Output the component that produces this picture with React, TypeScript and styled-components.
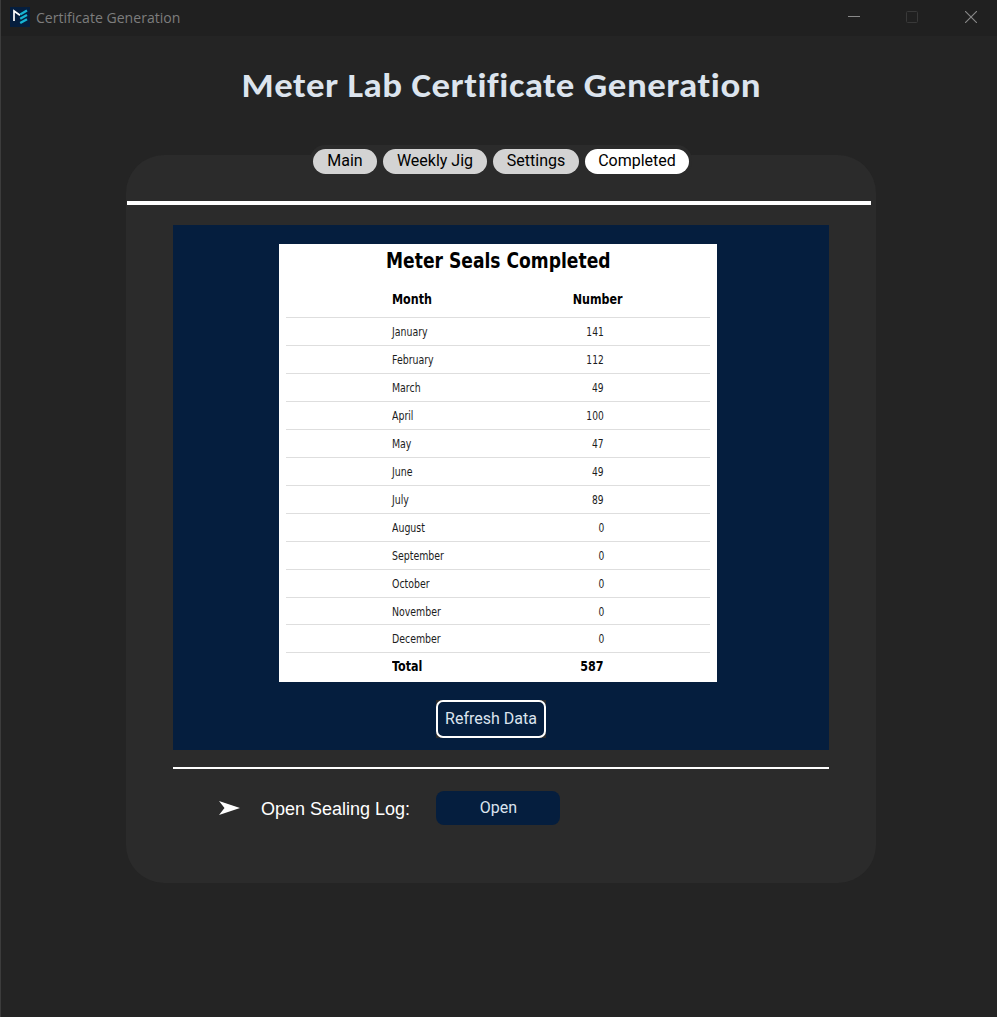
import React from 'react';
import styled, { createGlobalStyle } from 'styled-components';

const Global = createGlobalStyle`
  * { box-sizing: border-box; }
  body { margin: 0; background: #242424; }
`;

const Window = styled.div`
  width: 997px;
  height: 1017px;
  overflow: hidden;
  background: #242424;
  border-left: 1px solid #3c3c3c;
  display: flex;
  flex-direction: column;
  font-family: Roboto, sans-serif;
`;

const TitleBar = styled.header`
  height: 36px;
  flex: none;
  background: #202020;
  display: flex;
  align-items: center;
  padding-left: 9px;
  padding-bottom: 2px;
`;

const Condensed = styled.span<{ $x: number; $origin?: string }>`
  display: inline-block;
  white-space: nowrap;
  transform: scaleX(${p => p.$x});
  transform-origin: ${p => p.$origin ?? 'left'} center;
`;

const Caption = styled.span`
  flex: 1;
  margin-left: 6px;
  font: 15px/20px 'Open Sans', sans-serif;
  color: #7d7d7d;
`;

const Controls = styled.div`
  display: flex;
  gap: 46px;
  padding-right: 20px;

  svg:not(:last-child) {
    margin-left: -1px;
    margin-right: 1px;
  }
`;

const Heading = styled.h1`
  margin: 26px 0 0;
  height: 46px;
  display: flex;
  justify-content: center;
  padding-left: 5px;
  font: bold 34.5px/46px Carlito, Lato, sans-serif;
  font-variant-ligatures: none;
  letter-spacing: 0.5px;
  color: #dce4ee;
`;

const Panel = styled.main`
  width: 750px;
  height: 728px;
  margin: 47px 0 0 125px;
  border-radius: 38px;
  background: #2b2b2b;
`;

const Tabs = styled.nav`
  width: 382px;
  height: 31px;
  margin: -10px auto 0;
  padding: 4px 3px 0;
  border-radius: 15px;
  background: #2b2b2b;
  display: flex;
  gap: 6px;
`;

const Tab = styled.button<{ $width: number; $active?: boolean }>`
  width: ${p => p.$width}px;
  height: 25px;
  padding: 0 0 2px;
  border: 0;
  border-radius: 12.5px;
  background: ${p => (p.$active ? '#ffffff' : '#d3d3d3')};
  color: #000;
  font: 16px/23px Roboto, sans-serif;
`;

const HeaderRule = styled.div`
  width: 744px;
  height: 4px;
  margin: 25px 0 20px 1px;
  background: #fff;
`;

const DataFrame = styled.section`
  width: 656px;
  height: 525px;
  margin-left: 47px;
  padding: 19px 0 0 106px;
  background: #051e3e;
`;

const Sheet = styled.div`
  width: 438px;
  height: 438px;
  padding: 0 7px;
  background: #fff;
  color: #000;
  font-family: 'DejaVu Sans', sans-serif;
`;

const SheetTitle = styled.h2`
  height: 33px;
  margin: 0;
  display: flex;
  justify-content: center;
  font-size: 20.5px;
  line-height: 35px;
`;

const Row = styled.div<{ $kind?: 'head' | 'total' }>`
  height: ${p => (p.$kind === 'head' ? 41 : p.$kind === 'total' ? 26 : 27.96)}px;
  padding-left: 105.5px;
  padding-top: ${p => (p.$kind === 'head' ? 3 : p.$kind === 'total' ? 0 : 1)}px;
  border-bottom: ${p => (p.$kind === 'total' ? 0 : 1)}px solid #dedede;
  display: flex;
  align-items: center;
  font-size: ${p => (p.$kind ? 14.2 : 11.4)}px;
  font-weight: ${p => (p.$kind ? 'bold' : 'normal')};
  color: ${p => (p.$kind ? '#000' : '#1c1c1c')};
`;

const Month = styled.span`
  width: 130px;
`;

const Count = styled.span<{ $head?: boolean }>`
  width: ${p => (p.$head ? 101 : 82.4)}px;
  display: flex;
  justify-content: flex-end;
`;

const RefreshCorner = styled.div`
  width: 110px;
  height: 38px;
  margin: 18px 0 0 157px;
  background: #2b2b2b;
`;

const RefreshButton = styled.button`
  width: 110px;
  height: 38px;
  padding: 0 0 1px;
  border: 2px solid #fff;
  border-radius: 7px;
  background: #051e3e;
  color: #dce4ee;
  font: 16px Roboto, sans-serif;
`;

const FooterRule = styled.div`
  width: 656px;
  height: 2px;
  margin: 17px 0 22px 47px;
  background: #fff;
`;

const LogRow = styled.div`
  display: flex;
  align-items: center;
  height: 34px;
  padding-left: 93px;
`;

const LogLabel = styled.span`
  width: 175px;
  margin-left: 21px;
  padding-top: 2px;
  color: #fff;
  font: 18px 'Liberation Sans', Arial, sans-serif;
`;

const OpenButton = styled.button`
  width: 124px;
  height: 34px;
  padding: 0 0 2px 1px;
  border: 0;
  border-radius: 8px;
  background: #051e3e;
  color: #dce4ee;
  font: 16px Roboto, sans-serif;
`;

const months: [string, number][] = [
  ['January', 141], ['February', 112], ['March', 49], ['April', 100],
  ['May', 47], ['June', 49], ['July', 89], ['August', 0],
  ['September', 0], ['October', 0], ['November', 0], ['December', 0],
];

export default function App() {
  return (
    <>
      <Global />
      <Window>
        <TitleBar>
          <svg width="20" height="20" viewBox="0 0 20 20">
            <rect width="20" height="20" fill="#051e3e" />
            <path d="M4 14V4L10 8.2" fill="none" stroke="#fff" strokeWidth="1.7" />
            <path d="M10.2 7.5 17 3.6M10.2 11.8 17 7.9M10.2 16.1 17 12.2" stroke="#16b5d4" strokeWidth="2.3" />
          </svg>
          <Caption><Condensed $x={0.938}>Certificate Generation</Condensed></Caption>
          <Controls>
            <svg width="12" height="12" viewBox="0 0 12 12"><path d="M0 5.5H12" stroke="#898989" /></svg>
            <svg width="12" height="12" viewBox="0 0 12 12"><rect x=".5" y=".5" width="11" height="11" rx="1" fill="none" stroke="#393939" /></svg>
            <svg width="12" height="12" viewBox="0 0 12 12"><path d="M0 0 12 12M12 0 0 12" stroke="#898989" strokeWidth="1.1" /></svg>
          </Controls>
        </TitleBar>
        <Heading><Condensed $x={1.068} $origin="center">Meter Lab Certificate Generation</Condensed></Heading>
        <Panel>
          <Tabs>
            <Tab $width={64}>Main</Tab>
            <Tab $width={104}>Weekly Jig</Tab>
            <Tab $width={86}>Settings</Tab>
            <Tab $width={104} $active>Completed</Tab>
          </Tabs>
          <HeaderRule />
          <DataFrame>
            <Sheet>
              <SheetTitle><Condensed $x={0.836} $origin="center">Meter Seals Completed</Condensed></SheetTitle>
              <Row $kind="head">
                <Month><Condensed $x={0.785}>Month</Condensed></Month>
                <Count $head><Condensed $x={0.785} $origin="right">Number</Condensed></Count>
              </Row>
              {months.map(([name, count]) => (
                <Row key={name}>
                  <Month><Condensed $x={0.825}>{name}</Condensed></Month>
                  <Count><Condensed $x={0.8} $origin="right">{count}</Condensed></Count>
                </Row>
              ))}
              <Row $kind="total">
                <Month><Condensed $x={0.785}>Total</Condensed></Month>
                <Count><Condensed $x={0.785} $origin="right">587</Condensed></Count>
              </Row>
            </Sheet>
            <RefreshCorner><RefreshButton>Refresh Data</RefreshButton></RefreshCorner>
          </DataFrame>
          <FooterRule />
          <LogRow>
            <svg width="21" height="14" viewBox="0 0 21 14"><path d="M0 0 21 7 0 14 5.5 7Z" fill="#fff" /></svg>
            <LogLabel>Open Sealing Log:</LogLabel>
            <OpenButton>Open</OpenButton>
          </LogRow>
        </Panel>
      </Window>
    </>
  );
}
